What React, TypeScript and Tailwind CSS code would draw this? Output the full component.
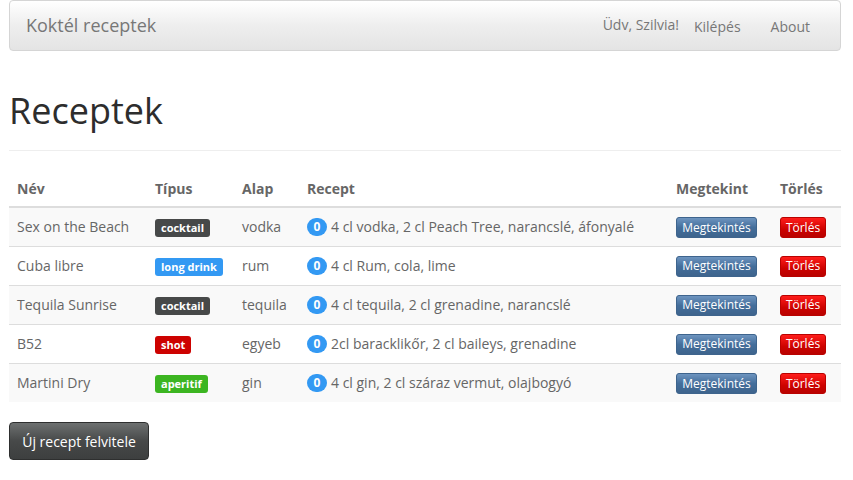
import React from "react";

type Row = {
  name: string;
  type: string;
  typeClass: string;
  base: string;
  recipe: string;
};

const rows: Row[] = [
  { name: "Sex on the Beach", type: "cocktail", typeClass: "bg-[#474949]", base: "vodka", recipe: "4 cl vodka, 2 cl Peach Tree, narancslé, áfonyalé" },
  { name: "Cuba libre", type: "long drink", typeClass: "bg-[#3399f3]", base: "rum", recipe: "4 cl Rum, cola, lime" },
  { name: "Tequila Sunrise", type: "cocktail", typeClass: "bg-[#474949]", base: "tequila", recipe: "4 cl tequila, 2 cl grenadine, narancslé" },
  { name: "B52", type: "shot", typeClass: "bg-[#cd0200]", base: "egyeb", recipe: "2cl baracklikőr, 2 cl baileys, grenadine" },
  { name: "Martini Dry", type: "aperitif", typeClass: "bg-[#3cb521]", base: "gin", recipe: "4 cl gin, 2 cl száraz vermut, olajbogyó" },
];

export default function App() {
  return (
    <div className="min-h-[480px] bg-white text-[14px] text-[#666666]" style={{ fontFamily: "'Open Sans', 'DejaVu Sans', sans-serif" }}>
      <div className="ml-[9px] w-[832px]">
        {/* Navbar */}
        <nav className="flex h-[51px] items-stretch rounded-[4px] border border-[#d5d5d5] bg-[linear-gradient(#ffffff,#eeeeee_50%,#e4e4e4)] text-[#777777]">
          <div className="flex items-center pb-[2px] pl-[16px] text-[18px] leading-[20px]">Koktél receptek</div>
          <div className="ml-auto flex items-center pr-[15px]">
            <span className="mb-[2px] mr-[15px] leading-[20px]">Üdv, Szilvia!</span>
            <span className="pt-[2px] leading-[20px]">Kilépés</span>
            <span className="ml-[30px] mr-[15px] pt-[2px] leading-[20px]">About</span>
          </div>
        </nav>

        {/* Page header */}
        <div className="mt-[40px] border-b border-[#eeeeee] pb-[9px]">
          <h1 className="mb-[10px] text-[36px] font-normal leading-[40px] text-[#2d2d2d]">Receptek</h1>
        </div>

        {/* Table */}
        <table className="mt-[20px] w-full table-fixed border-collapse">
          <colgroup>
            <col className="w-[138px]" />
            <col className="w-[87px]" />
            <col className="w-[65px]" />
            <col className="w-[369px]" />
            <col className="w-[104px]" />
            <col className="w-[69px]" />
          </colgroup>
          <thead>
            <tr className="border-b-2 border-[#dddddd]">
              <th className="h-[36px] px-[8px] text-left align-middle font-bold">Név</th>
              <th className="px-[8px] text-left align-middle font-bold">Típus</th>
              <th className="px-[8px] text-left align-middle font-bold">Alap</th>
              <th className="px-[8px] text-left align-middle font-bold">Recept</th>
              <th className="px-[8px] text-left align-middle font-bold">Megtekint</th>
              <th className="px-[8px] text-left align-middle font-bold">Törlés</th>
            </tr>
          </thead>
          <tbody>
            {rows.map((r, i) => (
              <tr key={r.name} className={(i % 2 === 0 ? "bg-[#f9f9f9] " : "bg-white ") + (i > 0 ? "border-t border-[#dddddd]" : "")}>
                <td className="h-[39px] whitespace-nowrap px-[8px] align-middle leading-[20px]">{r.name}</td>
                <td className="px-[8px] align-middle">
                  <span className={"inline-flex h-[18px] items-center whitespace-nowrap rounded-[3px] px-[6px] text-[11px] font-bold leading-none text-white " + r.typeClass}>
                    {r.type}
                  </span>
                </td>
                <td className="whitespace-nowrap px-[8px] align-middle leading-[20px]">{r.base}</td>
                <td className="whitespace-nowrap px-[8px] align-middle leading-[20px]">
                  <span className="inline-flex items-center">
                    <span className="mr-[4px] inline-flex h-[18px] min-w-[20px] items-center justify-center rounded-full bg-[#3399f3] px-[6px] text-[12px] font-bold leading-none text-white">0</span>
                    <span>{r.recipe}</span>
                  </span>
                </td>
                <td className="px-[8px] align-middle">
                  <span className="inline-flex h-[21px] w-[81px] items-center justify-center rounded-[3px] border border-[#3e648d] bg-[linear-gradient(#6d94bf,#446e9b_50%,#3e648d)] text-[12px] leading-none text-white">
                    Megtekintés
                  </span>
                </td>
                <td className="px-[8px] align-middle">
                  <span className="inline-flex h-[21px] w-[46px] items-center justify-center rounded-[3px] border border-[#b90200] bg-[linear-gradient(#ff1d1b,#cd0200_60%,#b90200)] text-[12px] leading-none text-white">
                    Törlés
                  </span>
                </td>
              </tr>
            ))}
          </tbody>
        </table>

        {/* New recipe button */}
        <div className="mt-[20px]">
          <span className="inline-flex h-[38px] w-[140px] items-center justify-center rounded-[4px] border border-[#2e2f2f] bg-[linear-gradient(#6d7070,#474949_50%,#3d3f3f)] text-[14px] text-white">
            Új recept felvitele
          </span>
        </div>
      </div>
    </div>
  );
}
